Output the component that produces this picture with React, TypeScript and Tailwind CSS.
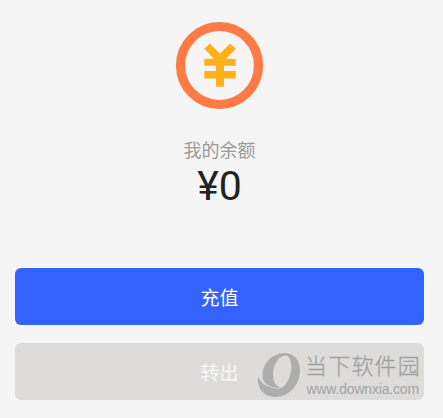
function CoinIcon() {
  return (
    <svg className="mr-px h-[89px] w-[90px]" viewBox="0 0 90 89" aria-hidden="true">
      <circle cx="45.5" cy="44.5" r="39" fill="none" stroke="#ff7a45" strokeWidth="9.2" />
      <path
        transform="translate(1.5 0.2)"
        fill="#ffb01b"
        d="M28.8 37.5H38.3L28.8 27.5L34.2 22.4L44.5 32.6L54.6 22.4L60.2 27.5L50.5 37.5H60.2V44.5H48.5V49.8H60.2V57.2H48.5V65.5H40.5V57.2H28.8V49.8H40.5V44.5H28.8Z"
      />
    </svg>
  );
}

function Watermark() {
  return (
    <div className="absolute top-[9px] right-[4px] flex text-[#9c9c9c]">
      <svg className="h-[46px] w-[44px]" viewBox="0 0 44 46" aria-hidden="true">
        <path
          fill="#adadad"
          d="M27 1C37 1 43 8 43 18C43 33 32 45 18 45C7 45-1 36 1.3 24C2.5 30 8 34 14 35.5C19 37 24 37 27 34C35 27 38 5 28 3Z"
        />
        <path
          fill="#adadad"
          d="M29 1C14 1 5.5 12 5.5 24C5.5 31 11 35 24 36.5C19 34 16 30 16 23C16 13 21 4 29 3.5Z"
        />
        <path d="M4 28.5C7 33.5 14 36 23 36.8" fill="none" stroke="#c9c8c8" strokeWidth="0.7" />
      </svg>
      <div className="ml-[4px] w-[115px]">
        <div className="mt-[2px] h-[25px] text-[22px] leading-[25px] font-light tracking-[1.2px] whitespace-nowrap [-webkit-text-stroke:0.3px_#a6a6a6]">当下软件园</div>
        <div className="mt-[2px] pl-[1.5px] font-['Liberation_Sans',sans-serif] text-[14px] leading-[16px] tracking-[-0.18px] whitespace-nowrap text-[#a3a3a3]">
          www.downxia.com
        </div>
      </div>
    </div>
  );
}

export default function App() {
  return (
    <main className="flex h-[418px] w-[443px] flex-col overflow-hidden bg-[#f5f5f5] pr-[19px] pl-[15px] font-[Roboto,'Noto_Sans_CJK_SC',sans-serif]">
      <section className="flex h-[268px] shrink-0 flex-col items-center pt-[21px]">
        <CoinIcon />
        <p className="mt-[28px] text-[18px] leading-[26px] text-[#999999]">我的余额</p>
        <p className="-mt-[2px] text-[41px] leading-[48px] text-[#222222]">¥0</p>
      </section>
      <button className="h-[57px] shrink-0 rounded-[6px] bg-[#3462ff] pt-[5px] text-[19px] text-white">充值</button>
      <div className="relative mt-[18px] h-[57px] shrink-0">
        <button className="h-full w-full rounded-[6px] bg-[#dddcdb] pt-[5px] text-[19px] text-[#f8f8f7]">转出</button>
        <Watermark />
      </div>
    </main>
  );
}
